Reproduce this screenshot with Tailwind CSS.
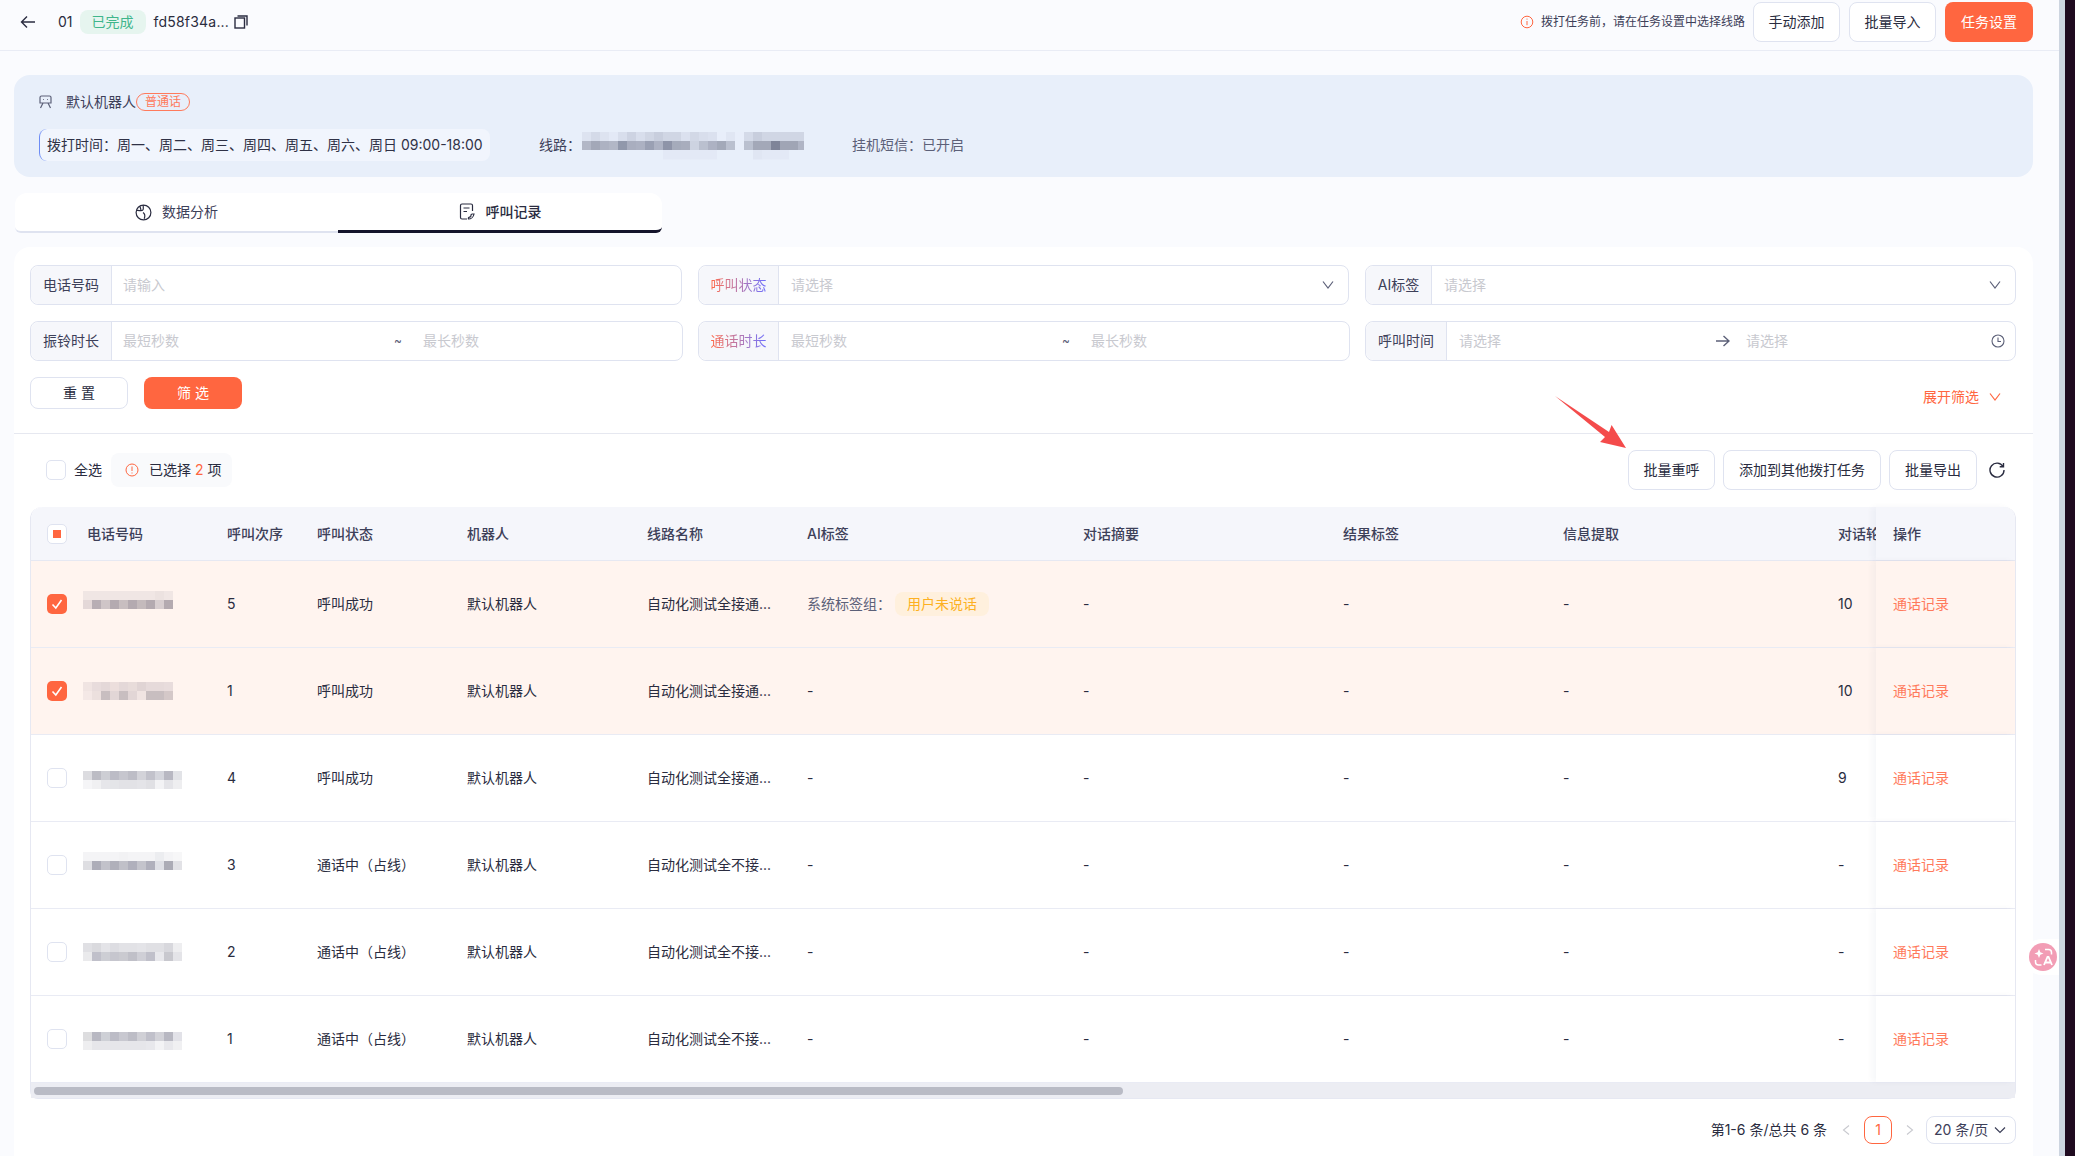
<!DOCTYPE html>
<html lang="zh-CN">
<head>
    <meta charset="UTF-8">
    <meta name="viewport" content="width=device-width, initial-scale=1.0">
    <title>任务详情 - 呼叫记录</title>
    <script src="https://cdn.jsdelivr.net/npm/@tailwindcss/browser@4"></script>
</head>
<body class="bg-[#1f0a1f] font-['Inter','Noto_Sans_CJK_SC',sans-serif] text-sm text-[#2a2c40]">
<div class="relative flex h-[1156px] w-[2075px] overflow-hidden">

    <!-- Page -->
    <div class="w-[2059px] shrink-0 bg-[#fafbfe]">

        <!-- Header -->
        <header class="flex h-[51px] items-start justify-between border-b border-[#e9ecf5] pr-[26px]">
            <div class="flex h-[44px] items-center">
                <svg class="ml-[20px] h-4 w-4" viewBox="0 0 16 16" fill="none" stroke="#2a2c40" stroke-width="1.4"><path d="M15 8H1.500M7 2.500 1.500 8 7 13.500"/></svg>
                <span class="ml-[22px] text-[#2a2c40]">01</span>
                <span class="ml-[7px] flex h-6 w-[66px] items-center justify-center rounded-lg bg-[#e6f5ef] text-[#3fb68b]">已完成</span>
                <span class="ml-[8px] tracking-[0.2px]">fd58f34a...</span>
                <svg class="ml-[5px] h-[14px] w-[14px]" viewBox="0 0 14 14" fill="none" stroke="#2a2c40" stroke-width="1.4"><rect x="1" y="3" width="9.500" height="10"/><path d="M3.500 1H13v9.500"/></svg>
            </div>
            <div class="flex h-[44px] items-center">
                <svg class="h-[14px] w-[14px]" viewBox="0 0 14 14" fill="none" stroke="#ff6640"><circle cx="7" cy="7" r="5.800"/><path d="M7 6v4.200M7 3.600v1"/></svg>
                <span class="ml-[7px] text-xs text-[#3d4059]">拨打任务前，请在任务设置中选择线路</span>
                <button class="ml-[8px] h-10 w-[87px] rounded-lg border border-[#dfe3f0] bg-white">手动添加</button>
                <button class="ml-[9px] h-10 w-[87px] rounded-lg border border-[#dfe3f0] bg-white">批量导入</button>
                <button class="ml-[9px] h-10 w-[88px] rounded-lg bg-[#ff6640] text-white">任务设置</button>
            </div>
        </header>

        <main class="pl-[14px] pr-[26px]">

            <!-- Robot info -->
            <section class="mt-[24px] h-[102px] rounded-2xl bg-[#e8effa] pl-[25px]">
                <div class="flex h-[54px] items-center">
                    <svg class="h-[14px] w-[13px]" viewBox="0 0 13 14" fill="none" stroke="#5c6078" stroke-width="1.200"><path d="M2.500 1h8A1.500 1.500 0 0 1 12 2.500V8H1V2.500A1.500 1.500 0 0 1 2.500 1zM4 4.500h.8M8.200 4.500H9M4 8 1.500 13M9 8l2.500 5"/></svg>
                    <span class="ml-[14px] text-[#3d4059]">默认机器人</span>
                    <span class="flex h-[18px] w-[54px] items-center justify-center rounded-full border border-[#ff7a5c] text-xs text-[#ff7a5c]">普通话</span>
                </div>
                <div class="flex items-center">
                    <div class="flex h-8 w-[451px] items-center rounded-lg border-l border-[#6d8cf5] bg-[#f1f5fd] pl-[7px] text-[#2f3146]">拨打时间：周一、周二、周三、周四、周五、周六、周日 09:00-18:00</div>
                    <span class="ml-[49px] text-[#3d4059]">线路：</span>
                    <svg id="line-mosaic" class="ml-px mt-[2px] h-7 w-[222px]" viewBox="0 0 222 28"></svg>
                    <span class="ml-[48px] text-[#5c6078]">挂机短信：已开启</span>
                </div>
            </section>

            <!-- Tabs -->
            <nav class="ml-px mt-4 flex h-10 w-[647px]">
                <div class="flex w-[323px] items-center justify-center gap-[10px] rounded-tl-xl rounded-bl-md border-b-2 border-[#dfe3f0] bg-white text-[#3d4059]">
                    <svg class="h-[17px] w-[17px]" viewBox="0 0 17 17" fill="none" stroke="#2a2c40" stroke-width="1.200"><circle cx="8.500" cy="8.500" r="7.400"/><path d="M8.500 1.200c-1 2 .8 3.200-.8 5C6.500 7.500 3.500 6 1.800 6.500M8 8.500c1.500 1 2.500 3 1.200 6.300M5 2.500l1 3.500"/></svg>
                    <span>数据分析</span>
                </div>
                <div class="flex w-[324px] items-center justify-center gap-[11px] rounded-tr-xl rounded-br-md border-b-[3px] border-[#14142b] bg-white font-medium">
                    <svg class="h-[17px] w-4" viewBox="0 0 16 17" fill="none" stroke="#2a2c40" stroke-width="1.200"><path d="M13.500 8V2.500a1.500 1.500 0 0 0-1.500-1.500H3a1.500 1.500 0 0 0-1.500 1.500v12A1.500 1.500 0 0 0 3 16h5M4.500 5h6M4.500 8.500h3.500M15 11c-.5 3-3 5-5.500 5-.5-1 0-1.500 1-2 .7.400 1.500-.5 1.500-1.200-.5-.8.500-1.800 1.200-1.800z"/></svg>
                    <span>呼叫记录</span>
                </div>
            </nav>

            <!-- Filters + table card -->
            <section class="mt-[14px] h-[909px] rounded-t-2xl bg-white">
                <div class="border-b border-[#e6e8f0] px-4 pt-[18px] pb-[24px]">
                    <div class="flex gap-4">
                        <div class="flex h-10 w-[652px] rounded-lg border border-[#dfe3f0]">
                            <span class="flex w-[81px] items-center justify-center rounded-l-lg border-r border-[#dfe3f0] bg-[#f6f7fb] text-[#3d4059]">电话号码</span>
                            <span class="flex flex-1 items-center pl-[11px] text-[#c8c9cf]">请输入</span>
                        </div>
                        <div class="flex h-10 w-[651px] rounded-lg border border-[#dfe3f0]">
                            <span class="flex w-[80px] items-center justify-center rounded-l-lg border-r border-[#dfe3f0] bg-[#f6f7fb]"><span class="bg-linear-to-r from-[#ff6640] to-[#6c6cff] bg-clip-text text-transparent">呼叫状态</span></span>
                            <span class="flex flex-1 items-center justify-between pl-3 pr-[14px] text-[#c8c9cf]">请选择
                                <svg class="h-[10px] w-3" viewBox="0 0 12 10" fill="none" stroke="#5c6078" stroke-width="1.200"><path d="M1 1.500 6 8l5-6.500"/></svg>
                            </span>
                        </div>
                        <div class="flex h-10 w-[651px] rounded-lg border border-[#dfe3f0]">
                            <span class="flex w-[66px] items-center justify-center rounded-l-lg border-r border-[#dfe3f0] bg-[#f6f7fb] text-[#3d4059]">AI标签</span>
                            <span class="flex flex-1 items-center justify-between pl-3 pr-[14px] text-[#c8c9cf]">请选择
                                <svg class="h-[10px] w-3" viewBox="0 0 12 10" fill="none" stroke="#5c6078" stroke-width="1.200"><path d="M1 1.500 6 8l5-6.500"/></svg>
                            </span>
                        </div>
                    </div>
                    <div class="mt-4 flex gap-[15px]">
                        <div class="flex h-10 w-[653px] rounded-lg border border-[#dfe3f0]">
                            <span class="flex w-[81px] items-center justify-center rounded-l-lg border-r border-[#dfe3f0] bg-[#f6f7fb] text-[#3d4059]">振铃时长</span>
                            <span class="flex flex-1 items-center pl-[11px] text-[#c8c9cf]"><span class="w-[271px]">最短秒数</span><span class="w-[29px] text-xs text-[#5c6078]">~</span><span>最长秒数</span></span>
                        </div>
                        <div class="flex h-10 w-[652px] rounded-lg border border-[#dfe3f0]">
                            <span class="flex w-[80px] items-center justify-center rounded-l-lg border-r border-[#dfe3f0] bg-[#f6f7fb]"><span class="bg-linear-to-r from-[#ff6640] to-[#6c6cff] bg-clip-text text-transparent">通话时长</span></span>
                            <span class="flex flex-1 items-center pl-3 text-[#c8c9cf]"><span class="w-[271px]">最短秒数</span><span class="w-[29px] text-xs text-[#5c6078]">~</span><span>最长秒数</span></span>
                        </div>
                        <div class="flex h-10 w-[651px] rounded-lg border border-[#dfe3f0]">
                            <span class="flex w-[81px] items-center justify-center rounded-l-lg border-r border-[#dfe3f0] bg-[#f6f7fb] text-[#3d4059]">呼叫时间</span>
                            <span class="flex flex-1 items-center pl-3 pr-[10px] text-[#c8c9cf]">
                                <span class="w-[257px]">请选择</span>
                                <svg class="h-3 w-[14px]" viewBox="0 0 14 12" fill="none" stroke="#5c6078" stroke-width="1.400"><path d="M0 6h13M7.500 1 13 6l-5.500 5"/></svg>
                                <span class="ml-[16px] flex-1">请选择</span>
                                <svg class="h-[14px] w-[14px]" viewBox="0 0 14 14" fill="none" stroke="#5c6078" stroke-width="1.100"><circle cx="7" cy="7" r="6"/><path d="M7 3.500V7.500H10"/></svg>
                            </span>
                        </div>
                    </div>
                    <div class="mt-4 flex justify-between">
                        <div class="flex gap-4">
                            <button class="h-8 w-[98px] rounded-lg border border-[#dfe3f0] bg-white">重 置</button>
                            <button class="h-8 w-[98px] rounded-lg bg-[#ff6640] text-white">筛 选</button>
                        </div>
                        <div class="flex items-center pt-2 pr-[16px] text-[#ff6640]">展开筛选
                            <svg class="ml-[10px] h-[10px] w-3" viewBox="0 0 12 10" fill="none" stroke="#ff6640" stroke-width="1.200"><path d="M1 1.500 6 8l5-6.500"/></svg>
                        </div>
                    </div>
                </div>

                <div class="px-4">
                    <!-- Toolbar -->
                    <div class="mt-[16px] flex h-[40px] items-center justify-between">
                        <div class="flex items-center pl-[16px]">
                            <span class="h-5 w-5 rounded-[5px] border border-[#dfe3f0] bg-white"></span>
                            <span class="ml-[8px]">全选</span>
                            <span class="ml-[9px] flex h-[34px] w-[121px] items-center gap-[10px] rounded-lg bg-[#f9fafc] pl-[14px]">
                                <svg class="h-[14px] w-[14px]" viewBox="0 0 14 14" fill="none" stroke="#ff6640"><circle cx="7" cy="7" r="6"/><path d="M7 3.500v4.500M7 9.500v1"/></svg>
                                <span>已选择 <span class="text-[#ff6640]">2</span> 项</span>
                            </span>
                        </div>
                        <div class="flex items-center">
                            <button class="h-10 w-[87px] rounded-lg border border-[#dfe3f0] bg-white">批量重呼</button>
                            <button class="ml-[8px] h-10 w-[158px] rounded-lg border border-[#dfe3f0] bg-white">添加到其他拨打任务</button>
                            <button class="ml-[8px] h-10 w-[88px] rounded-lg border border-[#dfe3f0] bg-white">批量导出</button>
                            <svg class="ml-[12px] mr-[12px] h-[16px] w-[16px]" viewBox="0 0 16 16" fill="none" stroke="#2a2c40" stroke-width="1.400"><path d="M14 4.500A7 7 0 1 0 15 8M14.500 1v3.800h-3.800"/></svg>
                        </div>
                    </div>

                    <!-- Table -->
                    <div class="mt-[17px] w-[1986px] rounded-t-xl rounded-b-lg border-x border-b border-[#e6e8f2]">
                        <div class="grid h-[54px] grid-cols-[196px_90px_150px_180px_160px_276px_260px_220px_275px_38px_139px] rounded-t-xl border-b border-[#e6e8f2] bg-[#f5f6fb] font-medium text-[#3d4059]">
                            <div class="flex items-center pl-[16px]">
                                <span class="flex h-5 w-5 items-center justify-center rounded-[5px] border border-[#dfe3f0] bg-white"><span class="h-2 w-2 bg-[#ff6640]"></span></span>
                                <span class="ml-[20px]">电话号码</span>
                            </div>
                            <div class="flex items-center">呼叫次序</div>
                            <div class="flex items-center">呼叫状态</div>
                            <div class="flex items-center">机器人</div>
                            <div class="flex items-center">线路名称</div>
                            <div class="flex items-center">AI标签</div>
                            <div class="flex items-center">对话摘要</div>
                            <div class="flex items-center">结果标签</div>
                            <div class="flex items-center">信息提取</div>
                            <div class="flex items-center overflow-hidden whitespace-nowrap">对话轮次</div>
                            <div class="flex items-center rounded-tr-xl bg-[#f5f6fb] pl-[17px] shadow-[-4px_0_6px_rgba(30,40,90,0.04)]">操作</div>
                        </div>
                        <div id="rows"></div>
                        <div class="h-[15px] bg-[#ecedf3] pt-[4px] pl-[3px]">
                            <div class="h-2 w-[1089px] rounded-full bg-[#b9bbc5]"></div>
                        </div>
                    </div>

                    <!-- Pagination -->
                    <div class="mt-[17px] flex h-7 w-[1986px] items-center justify-end">
                        <span>第1-6 条/总共 6 条</span>
                        <svg class="ml-[15px] h-[10px] w-[8px]" viewBox="0 0 8 10" fill="none" stroke="#c8c9cf" stroke-width="1.100"><path d="M7 .5 1.500 5 7 9.500"/></svg>
                        <span class="ml-[14px] flex h-7 w-7 items-center justify-center rounded-lg border border-[#ff6640] text-[#ff6640]">1</span>
                        <svg class="ml-[14px] h-[10px] w-[8px]" viewBox="0 0 8 10" fill="none" stroke="#c8c9cf" stroke-width="1.100"><path d="M1 .5 6.500 5 1 9.500"/></svg>
                        <span class="ml-[12px] flex h-7 w-[90px] items-center justify-between rounded-lg border border-[#dfe3f0] pl-[7px] pr-[9px] text-[#3d4059]">20 条/页
                            <svg class="h-[8px] w-3" viewBox="0 0 12 8" fill="none" stroke="#3d4059" stroke-width="1.200"><path d="M1 1.500 6 6.500l5-5"/></svg>
                        </span>
                    </div>
                </div>
            </section>
        </main>
    </div>

    <div class="w-[6px] shrink-0 bg-[#cdd5e0]"></div>
    <div class="flex-1 bg-[#1f0a1f]"></div>

    <!-- Red annotation arrow -->
    <svg class="absolute left-[1550px] top-[392px] h-[60px] w-[80px]" viewBox="0 0 80 60"><polygon points="5,4 59,40 61.600,33 76,56 50,50 55,45" fill="#f44b4b"/></svg>

    <!-- Floating translate widget -->
    <div class="absolute left-[2024px] top-[939px] flex h-[36px] w-[35px] items-center rounded-l-full bg-white pl-[5px]">
        <svg class="h-7 w-7" viewBox="0 0 28 28"><circle cx="14" cy="14" r="14" fill="#f29db5"/><path d="M10 6l1.300 3.200L14.500 10.500 11.300 11.800 10 15 8.700 11.800 5.500 10.500 8.700 9.200z" fill="#fff"/><path d="M16 6.500h3.500a3 3 0 0 1 3 3v2M6.500 17v2a3 3 0 0 0 3 3h3" fill="none" stroke="#fff" stroke-width="1.500"/><path d="M15 22l3.500-8h1l3.500 8M16.300 19.500h5.400" fill="none" stroke="#fff" stroke-width="1.800"/></svg>
    </div>
</div>

<script>
    const rows = [
        { mosaic: [["#f0e6e4","#f0e6e4","#f0e6e4","#f0e6e4","#f0e6e4","#f0e6e4","#f0e6e4","#f0e6e4","#ece2e0","#f0e6e4","#fff4ef"],["#e4d8d8","#b8aeb4","#cfc5c7","#b4aab0","#c8bec0","#b4aab0","#c4babc","#b4aab0","#d8ced0","#b4aab0","#fff4ef"]], y: -4, count: "5", status: "呼叫成功", line: "自动化测试全接通...", tag: true, turns: "10", selected: true },
        { mosaic: [["#f0e4e2","#e8dcdc","#e4d8d8","#ecdedc","#e4d8d8","#e8dcda","#e0d4d4","#e6dada","#e6dada","#e8dcdc","#fff4ef"],["#f4e8e6","#ece0de","#c8bec0","#e2d6d6","#c8bec0","#e2d6d6","#f0e4e2","#c8bec0","#c8bec0","#d4c8c8","#fff4ef"]], y: 0, count: "1", status: "呼叫成功", line: "自动化测试全接通...", tag: false, turns: "10", selected: true },
        { mosaic: [["#dcdce0","#bcbcc4","#cdced4","#bcbcc6","#c6c6ce","#bdbdc6","#d3d3d9","#c2c2cb","#d4d5dc","#b8b8c2","#e2e3e7"],["#f5f5f7","#f0f0f2","#e6e6ea","#e4e5e8","#e2e2e6","#e2e2e6","#e4e4e8","#e0e0e4","#f3f3f5","#e4e4e8","#eeeef0"]], y: 2, count: "4", status: "呼叫成功", line: "自动化测试全接通...", tag: false, turns: "9", selected: false },
        { mosaic: [["#f4f4f6","#f4f4f6","#f4f4f6","#f4f4f6","#f2f2f4","#f4f4f6","#f4f4f6","#f4f4f6","#ecedf0","#f4f4f6","#f7f7f8"],["#dedee2","#adadb8","#c2c2ca","#b0b0ba","#c0c0c8","#b0b0bc","#c4c4cc","#b0b0bc","#dfe0e6","#acacb6","#e2e2e6"]], y: -4, count: "3", status: "通话中（占线）", line: "自动化测试全不接...", tag: false, turns: "-", selected: false },
        { mosaic: [["#e0e0e4","#dadade","#e4e4e8","#dddde2","#e2e2e6","#e2e2e6","#e4e4e8","#e0e0e4","#e0e0e4","#d8d8dd","#eeeef0"],["#eaeaec","#c0c0ca","#cdced4","#c6c6ce","#cacad0","#c0c0c8","#cfcfd6","#c0c0ca","#e8e8ec","#c8c8ce","#e4e4e8"]], y: 0, count: "2", status: "通话中（占线）", line: "自动化测试全不接...", tag: false, turns: "-", selected: false },
        { mosaic: [["#dddddf","#b8b8c2","#ced0d6","#bcbcc6","#c8c8d0","#bdbdc6","#d0d0d6","#c0c0ca","#d2d2d8","#b8b8c2","#e2e2e8"],["#eeeef0","#e6e6ea","#e6e6ea","#e6e6ea","#e6e6ea","#e6e6ea","#e6e6ea","#e8e8ec","#f3f3f5","#e8e8ec","#f0f0f2"]], y: 2, count: "1", status: "通话中（占线）", line: "自动化测试全不接...", tag: false, turns: "-", selected: false },
    ];

    // pixelated stand-in for the masked phone numbers and line name
    function mosaicRects(bands) {
        return bands.map((band, r) => band.map((color, c) =>
            `<rect x="${c * 9}" y="${r * 9}" width="9.5" height="9.5" fill="${color}"/>`).join("")).join("");
    }

    const tableBody = document.getElementById("rows");

    tableBody.innerHTML = rows.map((row) => {
        const rowBg = row.selected ? "bg-[#fff4ef]" : "bg-white";
        const box = row.selected
            ? `<span class="flex h-5 w-5 items-center justify-center rounded-[5px] bg-[#ff6640]"><svg class="h-3 w-3" viewBox="0 0 12 12" fill="none" stroke="#fff" stroke-width="1.6"><path d="M1.500 6.500 4.800 10 10.500 2"/></svg></span>`
            : `<span class="h-5 w-5 rounded-[5px] border border-[#dfe3f0] bg-white"></span>`;
        const ai = row.tag
            ? `<span class="text-[#5c6078]">系统标签组：</span><span class="ml-[4px] flex h-6 w-[94px] items-center justify-center rounded-lg bg-[#fff0dd] text-[#fdb022]">用户未说话</span>`
            : "-";
        return `
            <div class="grid h-[87px] grid-cols-[196px_90px_150px_180px_160px_276px_260px_220px_275px_38px_139px] border-b border-[#e9ebf4] ${rowBg}">
                <div class="flex items-center pl-[16px]">
                    ${box}
                    <svg class="ml-[16px] h-[18px] w-[99px]" style="transform: translateY(${row.y}px)" viewBox="0 0 99 18">${mosaicRects(row.mosaic)}</svg>
                </div>
                <div class="flex items-center">${row.count}</div>
                <div class="flex items-center whitespace-nowrap">${row.status}</div>
                <div class="flex items-center">默认机器人</div>
                <div class="flex items-center">${row.line}</div>
                <div class="flex items-center">${ai}</div>
                <div class="flex items-center">-</div>
                <div class="flex items-center">-</div>
                <div class="flex items-center">-</div>
                <div class="flex items-center">${row.turns}</div>
                <div class="flex items-center pl-[17px] text-[#ff7a5c] shadow-[-4px_0_6px_rgba(30,40,90,0.04)] ${rowBg}">通话记录</div>
            </div>`;
    }).join("");

    document.getElementById("line-mosaic").innerHTML = mosaicRects([
        ["#dde3f0","#d4dae8","#dde3f0","#e3e9f6","#d8deec","#cdd3e2","#d8deec","#d0d6e4","#c8cedd","#d0d6e4","#d0d6e4","#dbe1ef","#d2d8e6","#d8deec","#dbe1ef","#e8eefa","#e0e6f3","#e8eefa","#d4dae8","#c8cedd","#d0d6e4","#d0d6e4","#d0d6e4","#d0d6e4","#d0d6e4"],
        ["#b2b7c6","#a3a8b8","#adb2c2","#b2b7c6","#9198ab","#a9aebf","#acb1c2","#9aa0b3","#adb2c3","#8e94a8","#a5abbb","#a8adbd","#cdd3e1","#bac0cf","#adb2c3","#a3a9b9","#bac0cf","#e8eefa","#bac0cf","#a3a8b8","#a3a8b8","#7f8498","#a0a5b5","#a0a5b5","#b0b5c5"],
        ["#e8effa","#e8effa","#e8effa","#e8effa","#e8effa","#e8effa","#e8effa","#e8effa","#e8effa","#e3e9f6","#e3e9f6","#e3e9f6","#e3e9f6","#e3e9f6","#e3e9f6","#e8effa","#e8effa","#e8effa","#e8effa","#e0e6f3","#e3e9f6","#e3e9f6","#e3e9f6","#e8effa","#e8effa"],
    ]);
</script>
</body>
</html>
